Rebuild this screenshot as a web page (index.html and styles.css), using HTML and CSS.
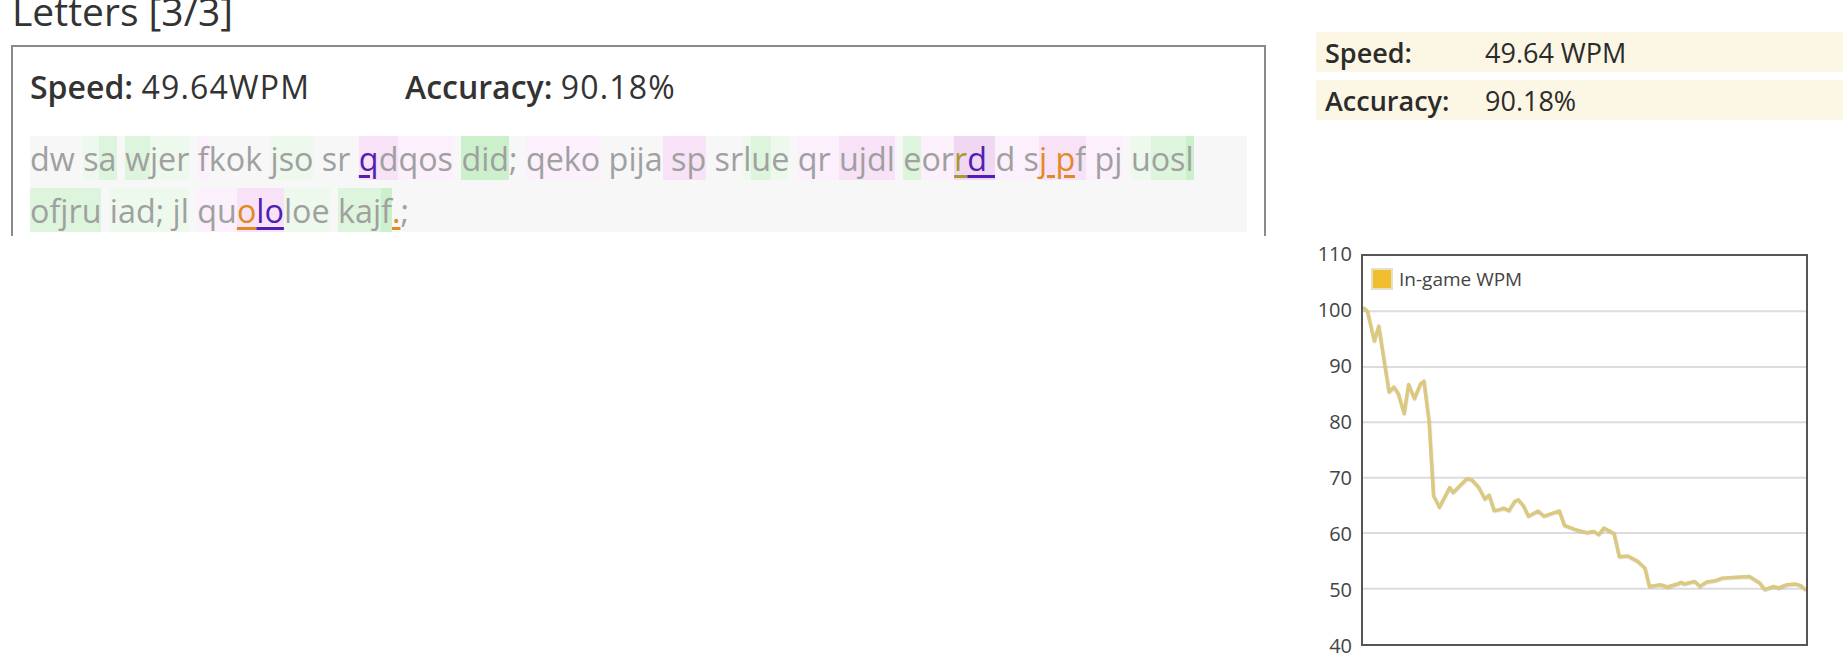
FILE: index.html
```html
<!DOCTYPE html>
<html>
<head>
<meta charset="utf-8">
<title>Letters [3/3]</title>
<link rel="stylesheet" href="styles.css">
</head>
<body>
<div class="page">
  <section class="left">
    <h2 class="title">Letters [3/3]</h2>
    <div class="result-box">
      <div class="stats">
        <div class="stat stat-speed"><b>Speed:</b> <span class="stat-value">49.64WPM</span></div>
        <div class="stat"><b>Accuracy:</b> <span class="stat-value">90.18%</span></div>
      </div>
      <div class="typed">
        <p>dw <span class="g1">s</span><span class="g2">a</span> <span class="g2">w</span><span class="g1">jer</span> <span class="p1">f</span>kok <span class="g1">jso</span> sr <span class="p2 err-pur">q</span><span class="p2">d</span><span class="p1">qos</span> <span class="g3">did</span>; <span class="p1">qeko</span> pija<span class="p2"> sp</span> sr<span class="g1">l</span><span class="g2">u</span><span class="g1">e</span> <span class="p1">qr </span><span class="p2">ujdl</span> <span class="g2">e</span><span class="p1">or</span><span class="p3 err-olv">r</span><span class="p3 err-pur">d </span><span class="p1">d s</span><span class="p2 err-org">j p</span><span class="p2">f</span><span class="p1"> pj</span> <span class="g1">u</span><span class="g2">os</span><span class="g3">l</span> <span class="g2">ofjru</span> <span class="g1">iad; jl</span> <span class="p1">qu</span><span class="p2 err-org">o</span><span class="p2 err-pur">lo</span><span class="g1">loe</span> <span class="g2">kaj</span><span class="g3">f</span><span class="err-org">.</span>;</p>
      </div>
    </div>
  </section>

  <aside class="right">
    <div class="summary">
      <div class="summary-row"><span class="summary-label">Speed:</span><span>49.64 WPM</span></div>
      <div class="summary-row"><span class="summary-label">Accuracy:</span><span>90.18%</span></div>
    </div>

    <div class="chart">
      <div class="yaxis">
        <span>110</span><span>100</span><span>90</span><span>80</span><span>70</span><span>60</span><span>50</span><span>40</span>
      </div>
      <div class="plot">
        <svg class="plot-svg" viewBox="0 0 1293 1178" preserveAspectRatio="none">
          <g class="grid">
            <line x1="0" y1="168" x2="1293" y2="168"/>
            <line x1="0" y1="337" x2="1293" y2="337"/>
            <line x1="0" y1="505" x2="1293" y2="505"/>
            <line x1="0" y1="673" x2="1293" y2="673"/>
            <line x1="0" y1="841" x2="1293" y2="841"/>
            <line x1="0" y1="1010" x2="1293" y2="1010"/>
          </g>
          <polyline class="wpm-line" points="0,156 13,168 33,258 46,213 76,413 90,398 103,418 120,478 133,390 150,433 168,388 178,380 193,503 206,728 223,763 253,703 263,718 303,676 318,680 338,703 356,738 368,726 383,773 398,770 411,766 426,773 443,745 453,740 468,758 483,790 511,774 528,790 548,783 573,774 588,818 618,830 653,840 673,836 688,846 703,826 733,843 748,913 773,911 803,928 823,948 836,1003 868,998 888,1005 918,996 928,991 938,996 968,988 983,1003 1003,990 1028,986 1048,978 1088,975 1128,973 1158,993 1173,1013 1198,1003 1213,1008 1238,998 1263,996 1278,1001 1293,1015"/>
        </svg>
        <div class="legend"><span class="legend-swatch"></span><span>In-game WPM</span></div>
      </div>
    </div>
  </aside>
</div>
</body>
</html>
```

FILE: styles.css
```css
html, body {
  margin: 0;
  padding: 0;
  background: #ffffff;
}

body {
  font-family: "Open Sans", "Noto Sans", sans-serif;
  color: #333333;
  width: 1843px;
  height: 670px;
  overflow: hidden;
}

.page {
  display: flex;
  align-items: flex-start;
}

/* ---------- left column ---------- */
.left {
  width: 1255px;
  margin-left: 11px;
  flex: none;
}

.title {
  margin: -9px 0 14px 1px;
  font-size: 39px;
  line-height: 40px;
  font-weight: 400;
  color: #333333;
}

.result-box {
  box-sizing: border-box;
  height: 191px;
  border: 2px solid #8a8a8a;
  border-bottom: none;
  padding: 20px 17px 0 17px;
}

.stats {
  display: flex;
  font-size: 32px;
  line-height: 40px;
  color: #333333;
  margin-bottom: 29px;
}

.stat b {
  font-weight: 600;
}

.stat-value {
  letter-spacing: 1.2px;
}

.stat-speed {
  width: 375px;
}

.typed {
  display: flow-root;
  background: #f7f7f7;
}

.typed p {
  margin: -4px 0;
  font-size: 32.3px;
  line-height: 52px;
  color: #a0a0a0;
}

.g1 { background: #eef9ee; }
.g2 { background: #ddf5dd; }
.g3 { background: #ccf0cc; }
.p1 { background: #fbf0fb; }
.p2 { background: #f7e2f7; }
.p3 { background: #f0d8f3; }

.err-pur,
.err-org,
.err-olv {
  text-decoration: underline;
  text-decoration-thickness: 3px;
  text-underline-offset: 4px;
}
.err-pur { color: #5020b4; }
.err-org { color: #e08a22; }
.err-olv { color: #a89a32; }

/* ---------- right column ---------- */
.right {
  margin-left: 50px;
  flex: 1;
  padding-top: 32px;
}

.summary {
  display: flex;
  flex-direction: column;
  gap: 8px;
}

.summary-row {
  display: grid;
  grid-template-columns: 160px 1fr;
  align-items: center;
  height: 40px;
  padding-left: 9px;
  background: #fcf6e4;
  font-size: 27px;
  color: #2b2b2b;
}

.summary-label {
  font-weight: 600;
}

.chart {
  display: flex;
  gap: 9px;
  margin-top: 134px;
}

.yaxis {
  width: 36px;
  height: 412px;
  margin-top: -10px;
  display: flex;
  flex-direction: column;
  justify-content: space-between;
  align-items: flex-end;
  font-size: 20px;
  line-height: 20px;
  color: #444444;
}

.plot {
  position: relative;
  box-sizing: border-box;
  width: 447px;
  height: 392px;
  border: 2px solid #555555;
  background: #ffffff;
}

.plot-svg {
  display: block;
  width: 100%;
  height: 100%;
}

.grid line {
  stroke: #dcdcdc;
  stroke-width: 2;
  vector-effect: non-scaling-stroke;
}

.wpm-line {
  fill: none;
  stroke: #dbc97f;
  stroke-width: 3.5;
  stroke-linejoin: round;
  vector-effect: non-scaling-stroke;
  filter: drop-shadow(1px 2px 1.5px rgba(0, 0, 0, 0.14));
}

.legend {
  position: absolute;
  left: 8px;
  top: 10px;
  display: flex;
  align-items: center;
  gap: 6px;
  font-size: 19px;
  color: #444444;
}

.legend-swatch {
  box-sizing: border-box;
  width: 22px;
  height: 22px;
  background: #f0be2e;
  border: 2px solid #e6e0c8;
}
```
